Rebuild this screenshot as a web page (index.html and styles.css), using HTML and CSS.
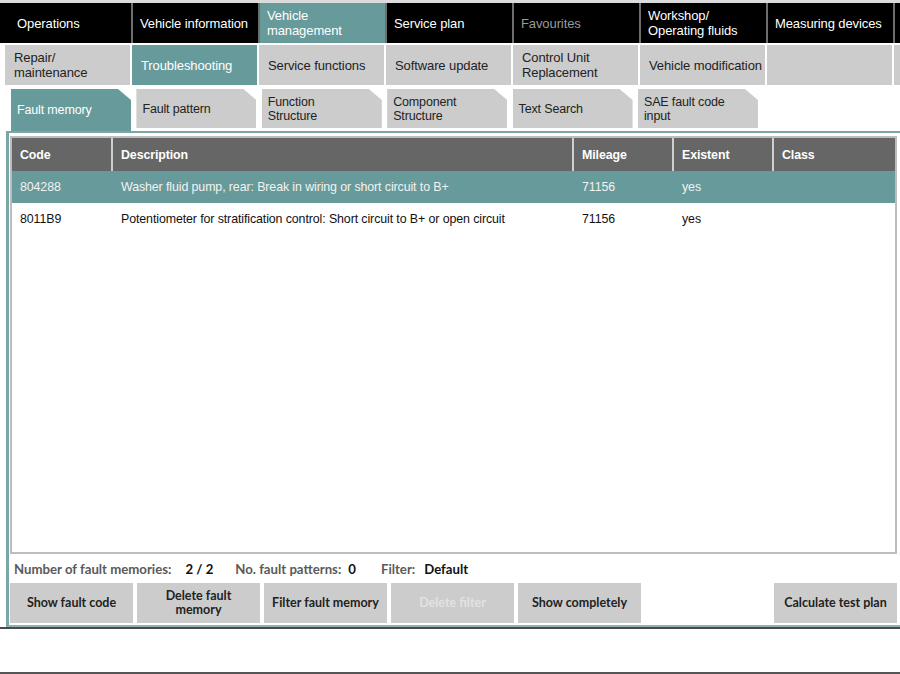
FILE: index.html
```html
<!DOCTYPE html>
<html>
<head>
<meta charset="utf-8">
<link rel="stylesheet" href="styles.css">
</head>
<body>
<div class="topline"></div>
<nav class="mainnav">
  <div class="mn first">Operations</div>
  <div class="mn">Vehicle information</div>
  <div class="mn active">Vehicle<br>management</div>
  <div class="mn">Service plan</div>
  <div class="mn dim">Favourites</div>
  <div class="mn">Workshop/<br>Operating fluids</div>
  <div class="mn">Measuring devices</div>
  <div class="mn last"></div>
</nav>
<nav class="subnav">
  <div class="sn">Repair/<br>maintenance</div>
  <div class="sn active">Troubleshooting</div>
  <div class="sn">Service functions</div>
  <div class="sn">Software update</div>
  <div class="sn">Control Unit<br>Replacement</div>
  <div class="sn">Vehicle modification</div>
  <div class="sn"></div>
  <div class="sn last"></div>
</nav>
<div class="tabs">
  <div class="tab active">Fault memory</div>
  <div class="tab">Fault pattern</div>
  <div class="tab">Function<br>Structure</div>
  <div class="tab">Component<br>Structure</div>
  <div class="tab">Text Search</div>
  <div class="tab">SAE fault code<br>input</div>
</div>
<section class="panel">
  <div class="grid">
    <div class="row head">
      <div class="c">Code</div>
      <div class="c">Description</div>
      <div class="c">Mileage</div>
      <div class="c">Existent</div>
      <div class="c">Class</div>
    </div>
    <div class="row sel">
      <div class="c">804288</div>
      <div class="c">Washer fluid pump, rear: Break in wiring or short circuit to B+</div>
      <div class="c">71156</div>
      <div class="c">yes</div>
      <div class="c"></div>
    </div>
    <div class="row">
      <div class="c">8011B9</div>
      <div class="c">Potentiometer for stratification control: Short circuit to B+ or open circuit</div>
      <div class="c">71156</div>
      <div class="c">yes</div>
      <div class="c"></div>
    </div>
  </div>
  <div class="status">
    <span class="lbl l1">Number of fault memories:</span><span class="val v1">2 / 2</span>
    <span class="lbl l2">No. fault patterns:</span><span class="val v2">0</span>
    <span class="lbl l3">Filter:</span><span class="val">Default</span>
  </div>
  <div class="buttons">
    <div class="btn">Show fault code</div>
    <div class="btn">Delete fault<br>memory</div>
    <div class="btn">Filter fault memory</div>
    <div class="btn disabled">Delete filter</div>
    <div class="btn">Show completely</div>
    <div class="spacer"></div>
    <div class="btn">Calculate test plan</div>
  </div>
</section>
<div class="darkline"></div>
<div class="footer"></div>
</body>
</html>
```

FILE: styles.css
```css
* { box-sizing: border-box; }
html, body { margin: 0; padding: 0; background: #fff; }
body {
  width: 900px;
  height: 674px;
  overflow: hidden;
  font-family: "Liberation Sans", Arial, sans-serif;
}
.topline { height: 3px; background: #dcdcdc; }

.mainnav {
  display: flex;
  height: 40px;
  background: #000;
  padding-left: 4px;
}
.mn {
  flex: 0 0 127px;
  display: flex;
  align-items: center;
  padding-left: 7px;
  border-left: 2px solid #6e6e6e;
  color: #fff;
  font-size: 13px;
  line-height: 15px;
  letter-spacing: -0.1px;
  white-space: nowrap;
  overflow: hidden;
}
.mn.first { border-left: 0; padding-left: 13px; }
.mn.active { background: #679a9a; }
.mn.dim { color: #9a9a9a; }
.mn.last { flex: 1 1 auto; }

.subnav {
  display: flex;
  gap: 2px;
  margin-top: 2px;
  height: 40px;
  padding-left: 5px;
}
.sn {
  flex: 0 0 125px;
  background: #cccccc;
  display: flex;
  align-items: center;
  padding-left: 9px;
  color: #222;
  font-size: 13px;
  line-height: 15px;
  letter-spacing: -0.1px;
  white-space: nowrap;
  overflow: hidden;
}
.sn.active { background: #679a9a; color: #fff; }
.sn.last { flex: 1 1 auto; }

.tabs {
  display: flex;
  align-items: flex-start;
  gap: 5.4px;
  margin-top: 4px;
  padding-left: 11px;
  height: 42px;
}
.tab {
  flex: 0 0 120px;
  height: 39px;
  background: #cccccc;
  clip-path: polygon(0 0, calc(100% - 13px) 0, 100% 11px, 100% 100%, 0 100%);
  display: flex;
  align-items: center;
  padding-left: 6px;
  color: #222;
  font-size: 12.5px;
  line-height: 14px;
  letter-spacing: -0.15px;
}
.tab.active { background: #679a9a; color: #fff; height: 42px; }

.panel {
  margin-left: 6px;
  border-top: 2px solid #7aa6a6;
  border-left: 3px solid #7aa6a6;
  border-bottom: 2px solid #8fb3b3;
  padding: 3px 3px 2px 1px;
}
.grid {
  height: 418px;
  border: 2px solid #bdbdbd;
  background: #fff;
}
.row {
  display: grid;
  grid-template-columns: 99px 461px 100px 100px 1fr;
  height: 32px;
  font-size: 12.4px;
  color: #111;
  letter-spacing: -0.1px;
}
.row .c {
  display: flex;
  align-items: center;
  padding-left: 8px;
  border-left: 2px solid transparent;
  white-space: nowrap;
  overflow: hidden;
}
.row .c:first-child { border-left: 0; }
.row.head { background: #666666; color: #fff; font-weight: bold; height: 33px; }
.row.head .c { border-left-color: #cfcfcf; }
.row.head .c:first-child { border-left: 0; }
.row.sel { background: #679a9a; color: #f2f2f2; }

.status {
  height: 29px;
  display: flex;
  align-items: center;
  padding-left: 4px;
  font-family: Lato, "Open Sans", sans-serif;
  font-weight: bold;
  font-size: 13.2px;
}
.status .lbl { color: #5a5a5a; }
.status .val { color: #111; }
.status .l1 { margin-right: 14px; }
.status .v1 { margin-right: 22px; }
.status .l2 { margin-right: 7px; }
.status .v2 { margin-right: 25px; }
.status .l3 { margin-right: 9px; }

.buttons {
  display: flex;
  gap: 4px;
  height: 40px;
}
.btn {
  flex: 0 0 123px;
  background: #cccccc;
  display: flex;
  align-items: center;
  justify-content: center;
  text-align: center;
  font-family: Lato, "Open Sans", sans-serif;
  font-weight: bold;
  font-size: 12.5px;
  line-height: 14px;
  color: #222;
}
.btn.disabled { color: #e2e2e2; }
.spacer { flex: 1 1 auto; }

.darkline { height: 2px; background: #4a4a4a; }
.footer {
  height: 45px;
  border-bottom: 2px solid #555;
}
```
